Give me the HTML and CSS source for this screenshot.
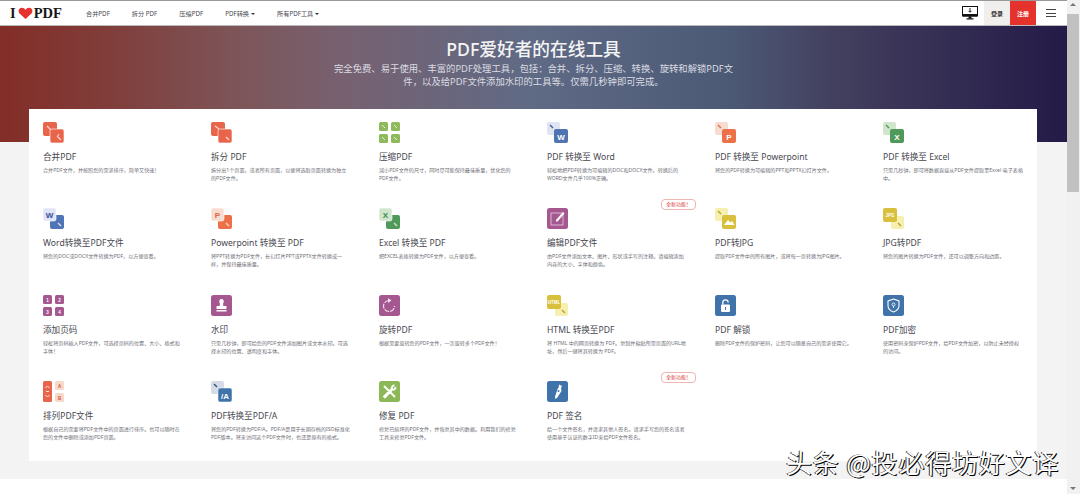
FILE: index.html
```html
<!DOCTYPE html>
<html lang="zh">
<head>
<meta charset="utf-8">
<title>I Love PDF</title>
<link rel="stylesheet" href="styles.css">
</head>
<body>
<div class="page">
<main class="main">
<header class="nav">
  <div class="logo">I<svg class="heart" viewBox="0 0 12 10"><path d="M6 10 1 5.500C-.6 3.600.4.6 3 .6c1.300 0 2.300.7 3 1.800C6.700 1.300 7.700.6 9 .6c2.600 0 3.600 3 2 4.900z" fill="#e5322d"/></svg>PDF</div>
  <nav class="menu">
    <span>合并PDF</span><span>拆分 PDF</span><span>压缩PDF</span><span>PDF转换<i class="caret"></i></span><span>所有PDF工具<i class="caret"></i></span>
  </nav>
  <div class="actions">
    <svg class="monitor" viewBox="0 0 16 14"><rect x=".5" y=".5" width="15" height="9.500" fill="none" stroke="#111" stroke-width="1"/><rect x="1" y="8" width="14" height="2.500" fill="#111"/><path d="M8 2v4M6.500 4.800 8 6.300l1.500-1.500" fill="none" stroke="#111" stroke-width=".9"/><rect x="6.500" y="10.500" width="3" height="2" fill="#111"/><rect x="4.500" y="12.300" width="7" height="1.200" fill="#111"/></svg>
    <span class="login">登录</span>
    <span class="signup">注册</span>
    <span class="burger"><i></i><i></i><i></i></span>
  </div>
</header>
<section class="hero">
  <h1>PDF爱好者的在线工具</h1>
  <p>完全免费、易于使用、丰富的PDF处理工具&#65292;包括&#65306;合并、拆分、压缩、转换、旋转和解锁PDF文件&#65292;以及给PDF文件添加水印的工具等。仅需几秒钟即可完成。</p>
</section>
<section class="card">
  <article class="tool"><svg class="ico" viewBox="0 0 21 21"><rect width="14" height="14" rx="2" fill="#e8644a"/><rect x="7" y="7" width="14" height="14" rx="2" fill="#e8644a" stroke="#fff" stroke-width=".6"/><path d="M4 4l4 4M15 15l3 3M16 12l-2 3" stroke="#fbd9cf" stroke-width="1.200"/></svg><h2>合并PDF</h2><p>合并PDF文件&#65292;并按照您的需求排序&#65292;简单又快速&#65281;</p></article>
  <article class="tool"><svg class="ico" viewBox="0 0 21 21"><rect width="14" height="14" rx="2" fill="#e8644a"/><rect x="7" y="7" width="14" height="14" rx="2" fill="#e8644a" stroke="#fff" stroke-width=".6"/><path d="M4 4l4 3M15 15l3 3" stroke="#fbd9cf" stroke-width="1.200"/></svg><h2>拆分 PDF</h2><p>拆分出1个页面&#65292;或者所有页面&#65292;以便将选取页面转换为独立的PDF文件。</p></article>
  <article class="tool"><svg class="ico" viewBox="0 0 21 21"><g fill="#8fba5c"><rect width="9" height="9" rx="1.500"/><rect x="12" width="9" height="9" rx="1.500"/><rect y="12" width="9" height="9" rx="1.500"/><rect x="12" y="12" width="9" height="9" rx="1.500"/></g><path d="M3 3l3 3M15 3l3 3M3 15l3 3M15 15l3 3" stroke="#e4efd4" stroke-width="1"/></svg><h2>压缩PDF</h2><p>减小PDF文件的尺寸&#65292;同时尽可能保持最佳质量&#65292;优化您的PDF文件。</p></article>
  <article class="tool"><svg class="ico" viewBox="0 0 21 21"><rect width="13" height="13" rx="2" fill="#dfe4f2"/><path d="M3 3l3 3" stroke="#4a5f98" stroke-width="1.400"/><rect x="7" y="7" width="14" height="14" rx="2" fill="#4f74b0"/><text x="14" y="17.500" class="ict">W</text></svg><h2>PDF 转换至 Word</h2><p>轻松地把PDF转换为可编辑的DOC和DOCX文件。转换后的WORD文件几乎100%正确。</p></article>
  <article class="tool"><svg class="ico" viewBox="0 0 21 21"><rect width="13" height="13" rx="2" fill="#f8dcd0"/><path d="M3 3l3 3" stroke="#d8745a" stroke-width="1.400"/><rect x="7" y="7" width="14" height="14" rx="2" fill="#ec7048"/><text x="14" y="17.500" class="ict">P</text></svg><h2>PDF 转换至 Powerpoint</h2><p>将您的PDF转换为可编辑的PPT和PPTX幻灯片文件。</p></article>
  <article class="tool"><svg class="ico" viewBox="0 0 21 21"><rect width="13" height="13" rx="2" fill="#cfe6cd"/><path d="M3 3l3 3" stroke="#4f9a5a" stroke-width="1.400"/><rect x="7" y="7" width="14" height="14" rx="2" fill="#4f9a5a"/><text x="14" y="17.500" class="ict">X</text></svg><h2>PDF 转换至 Excel</h2><p>只需几秒钟&#65292;即可将数据直接从PDF文件提取至Excel 电子表格中。</p></article>

  <article class="tool"><svg class="ico" viewBox="0 0 21 21"><rect x="7" y="7" width="14" height="14" rx="2" fill="#4f74b8"/><rect width="13" height="13" rx="2" fill="#dfe4f6" stroke="#fff" stroke-width=".6"/><text x="6.500" y="10" class="ict ict-w">W</text><path d="M15 15l3 3" stroke="#dfe4f6" stroke-width="1.200"/></svg><h2>Word转换至PDF文件</h2><p>将您的DOC或DOCX文件转换为PDF&#65292;以方便查看。</p></article>
  <article class="tool"><svg class="ico" viewBox="0 0 21 21"><rect x="7" y="7" width="14" height="14" rx="2" fill="#ec7048"/><rect width="13" height="13" rx="2" fill="#f8dcd0" stroke="#fff" stroke-width=".6"/><text x="6.500" y="10" class="ict ict-p">P</text><path d="M15 15l3 3" stroke="#f8dcd0" stroke-width="1.200"/></svg><h2>Powerpoint 转换至 PDF</h2><p>将PPT转换为PDF文件&#65292;长幻灯片PPT或PPTX文件转换成一样&#65292;并保持最佳质量。</p></article>
  <article class="tool"><svg class="ico" viewBox="0 0 21 21"><rect x="7" y="7" width="14" height="14" rx="2" fill="#4f9a5a"/><rect width="13" height="13" rx="2" fill="#cfe6cd" stroke="#fff" stroke-width=".6"/><text x="6.500" y="10" class="ict ict-x">X</text><path d="M15 15l3 3" stroke="#cfe6cd" stroke-width="1.200"/></svg><h2>Excel 转换至 PDF</h2><p>把EXCEL表格转换为PDF文件&#65292;以方便查看。</p></article>
  <article class="tool"><span class="badge">全新功能&#65281;</span><svg class="ico" viewBox="0 0 21 21"><rect width="21" height="21" rx="2.500" fill="#a4588f"/><rect x="4" y="5" width="12" height="12" fill="none" stroke="#e9cfe2" stroke-width=".8"/><path d="M9 12l7-8 1.500 1.500-7 8H9z" fill="#fff"/></svg><h2>编辑PDF文件</h2><p>由PDF文件添加文本、图片、形状或手写的注释。请编辑添加内容的大小、字体和颜色。</p></article>
  <article class="tool"><svg class="ico" viewBox="0 0 21 21"><rect width="13" height="13" rx="2" fill="#f6efb0"/><path d="M3 3l3 3" stroke="#b7a32c" stroke-width="1.400"/><rect x="7" y="7" width="14" height="14" rx="2" fill="#d8c03c"/><path d="M9 17l4-5 2.500 2.500L17 13l2.500 4z" fill="#fff"/></svg><h2>PDF转JPG</h2><p>提取PDF文件中的所有图片&#65292;或将每一页转换为JPG图片。</p></article>
  <article class="tool"><svg class="ico" viewBox="0 0 21 21"><rect x="8" y="8" width="13" height="13" rx="2" fill="#f6efb0"/><path d="M15 15l3 3" stroke="#b7a32c" stroke-width="1.400"/><rect width="14" height="14" rx="2" fill="#d8c03c"/><text x="7" y="9" class="ict ict-s">JPG</text></svg><h2>JPG转PDF</h2><p>将您的图片转换为PDF文件&#65292;还可以调整方向和边距。</p></article>

  <article class="tool"><svg class="ico" viewBox="0 0 21 21"><g fill="#a4588f"><rect width="9" height="9" rx="1.500"/><rect x="12" width="9" height="9" rx="1.500"/><rect y="12" width="9" height="9" rx="1.500"/><rect x="12" y="12" width="9" height="9" rx="1.500"/></g><text x="4.500" y="7" class="ict ict-s">1</text><text x="16.500" y="7" class="ict ict-s">2</text><text x="4.500" y="19" class="ict ict-s">3</text><text x="16.500" y="19" class="ict ict-s">4</text></svg><h2>添加页码</h2><p>轻松将页码插入PDF文件&#65292;可选择页码的位置、大小、格式和字体&#65281;</p></article>
  <article class="tool"><svg class="ico" viewBox="0 0 21 21"><rect width="21" height="21" rx="2.500" fill="#a4588f"/><path d="M8.500 7.500a2.300 2.300 0 1 1 4 0c-.5.9-.6 2.500 0 3.500h3v3h-10v-3h3c.6-1 .5-2.600 0-3.500zM5.500 15h10v1.500h-10z" fill="#fff"/></svg><h2>水印</h2><p>只需几秒钟&#65292;即可给您的PDF文件添加图片或文本水印。可选择水印的位置、透明度和字体。</p></article>
  <article class="tool"><svg class="ico" viewBox="0 0 21 21"><rect width="21" height="21" rx="2.500" fill="#a4588f"/><path d="M10 5.500a5.500 5.500 0 1 0 5.500 5.500" fill="none" stroke="#f0dcea" stroke-width="1.200" stroke-dasharray="5 1"/><path d="M9 3l3.500 2.500L9 8z" fill="#f0dcea"/></svg><h2>旋转PDF</h2><p>根据需要旋转您的PDF文件&#65292;一次旋转多个PDF文件&#65281;</p></article>
  <article class="tool"><svg class="ico" viewBox="0 0 21 21"><rect x="8" y="8" width="13" height="13" rx="2" fill="#f6efb0"/><path d="M15 15l3 3" stroke="#b7a32c" stroke-width="1.400"/><rect width="14" height="14" rx="2" fill="#d8c03c"/><text x="7" y="9" class="ict ict-s">HTML</text></svg><h2>HTML 转换至PDF</h2><p>将 HTML 中的网页转换为 PDF。复制并粘贴所需页面的URL地址&#65292;然后一键将其转换为 PDF。</p></article>
  <article class="tool"><svg class="ico" viewBox="0 0 21 21"><rect width="21" height="21" rx="2.500" fill="#3f73aa"/><rect x="6" y="9.500" width="9" height="7.500" rx="1" fill="#fff"/><path d="M7.800 9.500V7.500a2.700 2.700 0 0 1 5.400 0" fill="none" stroke="#fff" stroke-width="1.300"/><rect x="10" y="12" width="1" height="3" fill="#3f73aa"/></svg><h2>PDF 解锁</h2><p>删除PDF文件的保护密码&#65292;让您可以随意自己的需求使用它。</p></article>
  <article class="tool"><svg class="ico" viewBox="0 0 21 21"><rect width="21" height="21" rx="2.500" fill="#3f73aa"/><path d="M10.500 4l5.500 2v4.500c0 3-2.300 5.300-5.500 6.500C7.300 15.800 5 13.500 5 10.500V6z" fill="none" stroke="#fff" stroke-width="1.100"/><circle cx="10.500" cy="9.500" r="1.500" fill="none" stroke="#fff" stroke-width=".8"/><path d="M10.500 11v2" stroke="#fff" stroke-width=".8"/></svg><h2>PDF加密</h2><p>使用密码来保护PDF文件&#65292;给PDF文件加密&#65292;以防止未经授权的访问。</p></article>

  <article class="tool"><svg class="ico" viewBox="0 0 21 21"><rect width="9" height="21" rx="1.500" fill="#e8644a"/><rect x="12" width="9" height="9" rx="1.500" fill="#f8d8c8"/><rect x="12" y="12" width="9" height="9" rx="1.500" fill="#f8d8c8"/><path d="M2.500 7l2-2 2 2M2.500 14l2 2 2-2M3 10.500h3" fill="none" stroke="#fde6dc" stroke-width="1"/><text x="16.500" y="7" class="ict ict-s ict-o">A</text><text x="16.500" y="19" class="ict ict-s ict-o">B</text></svg><h2>排列PDF文件</h2><p>根据自己的需要将PDF文件中的页面进行排序。也可以随时在您的文件中删除或添加PDF页面。</p></article>
  <article class="tool"><svg class="ico" viewBox="0 0 21 21"><rect width="13" height="13" rx="2" fill="#d6dbe8"/><path d="M3 3l3 3" stroke="#34507e" stroke-width="1.400"/><rect x="7" y="7" width="14" height="14" rx="2" fill="#3f73aa" stroke="#fff" stroke-width=".5"/><text x="14" y="17.500" class="ict">/A</text></svg><h2>PDF转换至PDF/A</h2><p>将您的PDF转换为PDF/A。PDF/A是用于长期存档的ISO标准化PDF版本。将来访问这个PDF文件时&#65292;也还是原有的格式。</p></article>
  <article class="tool"><svg class="ico" viewBox="0 0 21 21"><rect width="21" height="21" rx="2.500" fill="#8cb858"/><path d="M5 5l11 11M15.500 4.500c-2 0-3 1.500-2.500 3L5 15.500 6 16.500l7.500-8c1.500.5 3-.5 3-2.500" fill="none" stroke="#fff" stroke-width="1.800"/></svg><h2>修复 PDF</h2><p>修复已损坏的PDF文件&#65292;并恢复其中的数据。利用我们的修复工具来修复PDF文件。</p></article>
  <article class="tool"><span class="badge">全新功能&#65281;</span><svg class="ico" viewBox="0 0 21 21"><rect width="21" height="21" rx="2.500" fill="#3f73aa"/><path d="M12 3.500l3 1.500-1 2 .5 3-4.500 7-2 .7.100-2.400 2.500-7.300 1-1.500z" fill="#fff"/><circle cx="11.500" cy="10" r="1" fill="#3f73aa"/></svg><h2>PDF 签名</h2><p>给一个文件签名&#65292;并请求其他人签名。请求手写您的签名或者使用基于认证的数字ID来给PDF文件签名。</p></article>
</section>
<footer class="foot"></footer>
</main>
<aside class="scroll"><i class="arrow-up"></i><span class="thumb"></span><i class="arrow-down"></i></aside>
</div>
<div class="mark">头条 @投必得坊好文译</div>
</body>
</html>
```

FILE: styles.css
```css
* { box-sizing: border-box; }
html, body { margin: 0; height: 494px; overflow: hidden; background: #fff; }
body { font-family: "Noto Sans", "Noto Sans CJK SC", sans-serif; color: #47474f; }
.page { display: flex; height: 494px; }
.main { width: 1067px; background: #f3f3f3; }
.nav { display: flex; align-items: center; height: 26px; padding-left: 10px; background: #fff; border-top: 1px solid #999; border-bottom: 1px solid #bbb; }
.logo { display: flex; align-items: center; width: 76px; font: bold 14.500px "Liberation Serif", serif; color: #161616; }
.heart { width: 15px; height: 12px; margin: 0 1px 0 2px; }
.menu { display: flex; gap: 22px; font-size: 6.200px; color: #47474f; }
.caret { display: inline-block; margin-left: 2px; vertical-align: 1px; border: 2px solid transparent; border-top: 2.500px solid #333; border-bottom: 0; }
.actions { display: flex; align-items: center; height: 100%; margin-left: auto; }
.monitor { width: 16px; height: 14px; margin-right: 6px; }
.login, .signup { display: flex; align-items: center; justify-content: center; width: 26px; height: 100%; font-size: 6px; font-weight: 700; }
.login { background: #f1efee; color: #333; }
.signup { background: #e5322d; color: #fff; }
.burger { display: flex; flex-direction: column; gap: 2.500px; width: 10px; margin: 0 11px 0 10px; }
.burger i { height: 1px; background: #444; }
.hero { height: 116px; padding-top: 13px; text-align: center; color: #fff; background: linear-gradient(90deg, #832d27 0%, #803f3c 11%, #7d5558 22%, #776170 32%, #5f6a85 50%, #4c5a76 68%, #43405f 78%, #241a47 100%); }
.hero h1 { margin: 0; font-size: 17.700px; line-height: 20px; font-weight: 500; color: #f4f4f4; }
.hero p { width: 404px; margin: 3px auto 0; font-size: 9.360px; line-height: 13px; color: #dcdde2; }
.card { position: relative; display: grid; grid-template-columns: repeat(6, 1fr); grid-auto-rows: 86.330px; width: 1008px; height: 352px; margin: -33px 0 18px 29px; background: #fff; }
.tool { position: relative; padding: 13px 14px 0; }
.ico { display: block; width: 21px; height: 21px; }
.ict { font: bold 8px "Liberation Sans", sans-serif; fill: #fff; text-anchor: middle; }
.ict-w { fill: #35509a; }
.ict-p { fill: #d8654a; }
.ict-x { fill: #3f8a4a; }
.ict-s { font-size: 4.500px; }
.ict-o { fill: #c85a40; }
.tool h2 { margin: 8px 0 0; font-size: 8.600px; line-height: 12px; font-weight: 400; color: #47474f; }
.tool p { margin: 3px 0 0; font-size: 5.100px; line-height: 8px; color: #6e6e76; }
.badge { position: absolute; top: 4px; right: 5px; padding: 0 4px; font-size: 5px; line-height: 9px; color: #d8332c; background: #fff; border: 1px solid #eeb5b2; border-radius: 4px; }
.foot { height: 15px; background: #fff; }
.scroll { position: relative; flex: 1; background: #f1f1f1; }
.thumb { position: absolute; top: 14px; left: 0; width: 12px; height: 178px; background: #c1c1c1; }
.arrow-up, .arrow-down { position: absolute; left: 3px; border: 3px solid transparent; }
.arrow-up { top: 3px; border-bottom: 3px solid #777; border-top: 0; }
.arrow-down { bottom: 4px; border-top: 3px solid #777; border-bottom: 0; }
.mark { position: absolute; left: 786px; top: 446px; font: 26px/32px "Noto Sans CJK SC", sans-serif; letter-spacing: .8px; color: #fff; text-shadow: 1px 1px 0 #000, -1px 0 0 #333; white-space: nowrap; }
```
